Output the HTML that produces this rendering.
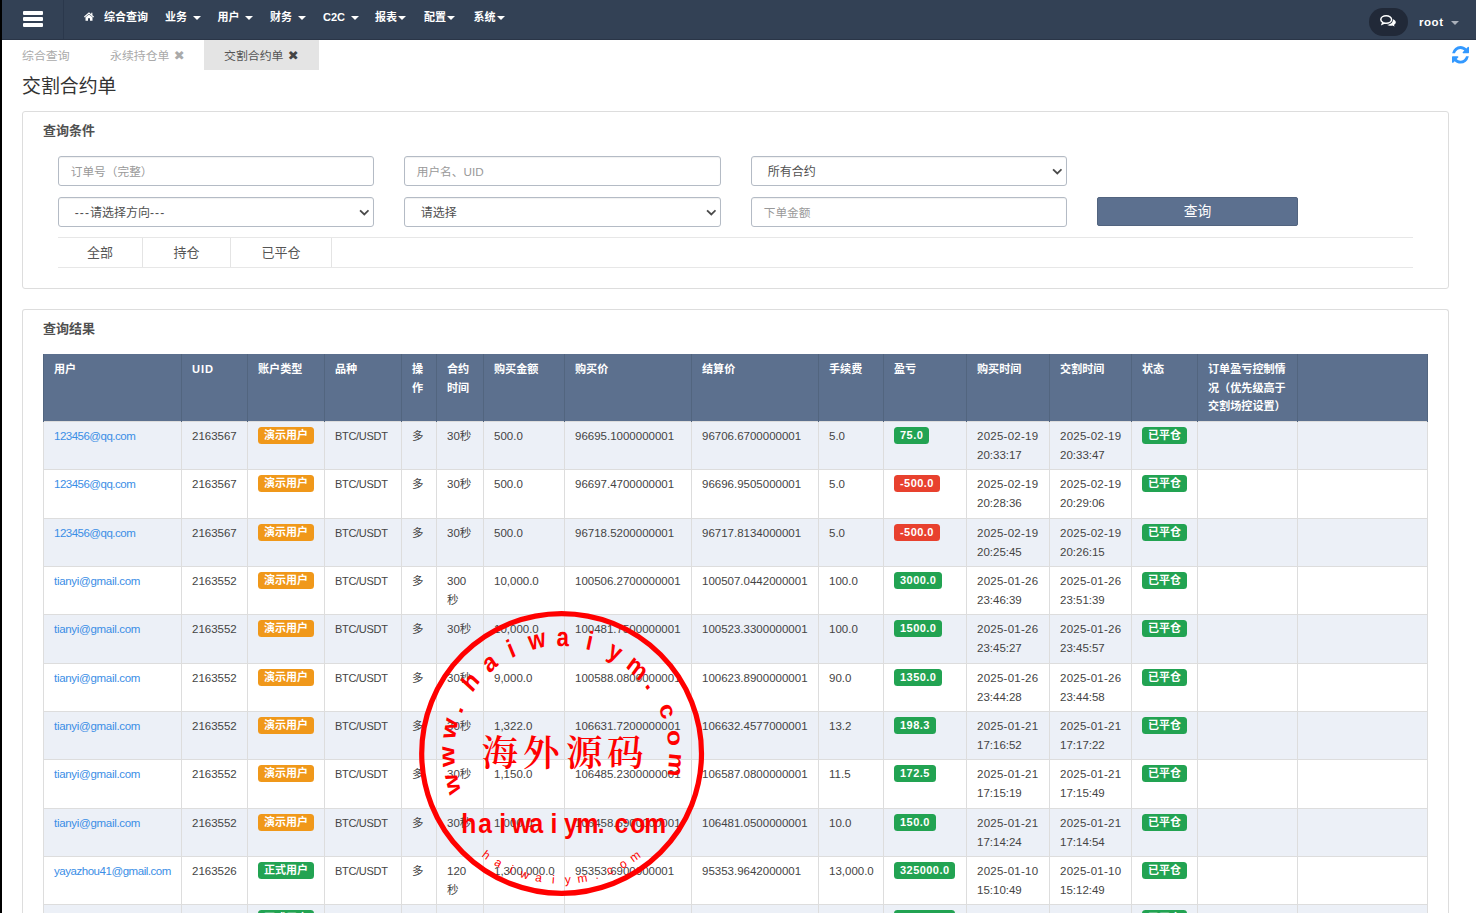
<!DOCTYPE html>
<html lang="zh-CN">
<head>
<meta charset="utf-8">
<title>交割合约单</title>
<style>
*{box-sizing:border-box;margin:0;padding:0}
html,body{width:1476px;height:913px;overflow:hidden;background:#fff}
body{font-family:"Liberation Sans","Noto Sans CJK SC",sans-serif;color:#333;font-size:11.7px;position:relative}
.edge{position:absolute;left:0;top:0;width:2px;height:913px;background:#000;z-index:50}
.nav{position:absolute;left:0;top:0;width:1476px;height:39.5px;background:#334155;border-bottom:1px solid #2a3547}
.nav .sep{position:absolute;left:63px;top:0;width:1px;height:39px;background:#2b384c}
.hb{position:absolute;left:22.5px;width:20px;height:4px;background:#fff;border-radius:1px}
.menu{position:absolute;top:0;left:0;height:39px;color:#fff;font-weight:bold;font-size:11px;line-height:35px;white-space:nowrap}
.menu span{position:absolute;top:0}
.car{display:inline-block;width:0;height:0;border-left:4px solid transparent;border-right:4px solid transparent;border-top:4px solid #fff;vertical-align:middle;margin-left:5.5px;position:relative;top:0px}
.chat{position:absolute;left:1369px;top:8px;width:39px;height:27.5px;border-radius:14px;background:#212938}
.root{position:absolute;left:1419px;top:0;line-height:45px;font-size:11.5px;letter-spacing:0.55px;font-weight:bold;color:#fff}
.rcar{position:absolute;left:1451px;top:20.5px;width:0;height:0;border-left:4px solid transparent;border-right:4px solid transparent;border-top:4px solid #aab0ba}
.tabs{position:absolute;left:0;top:40px;height:30px;width:1476px;font-size:11.9px;line-height:32px}
.tabs span{position:absolute;top:0;white-space:nowrap}
.tabs .act{left:204px;width:114.5px;height:30px;background:#e4e4e4}
.x{font-family:"DejaVu Sans",sans-serif;font-weight:bold;font-size:13px;margin-left:1px;line-height:10px}
h1{position:absolute;left:22px;top:71.5px;font-size:18.9px;font-weight:normal;line-height:30px;color:#333}
.panel{position:absolute;left:22px;width:1427px;border:1px solid #ddd;border-radius:3px;background:#fff}
.pt{position:absolute;left:20px;font-size:13px;font-weight:bold;color:#505050;line-height:20px}
.inp{position:absolute;height:30px;border:1px solid #b4bbc5;border-radius:3px;background:#fff;font-size:11.7px;line-height:29.5px;padding-left:12px;color:#999;box-shadow:inset 0 1px 1px rgba(0,0,0,.06)}
.sel{color:#505050;padding-left:16px;font-size:12px;line-height:31px}.ds{font-style:normal;letter-spacing:1.1px}
.sel svg{position:absolute;right:3.5px;top:11px}
.btn{position:absolute;left:1074.2px;top:85px;width:200.5px;height:29.3px;background:#5c708f;border:1px solid #52647f;border-radius:2px;color:#fff;font-size:13.8px;line-height:27px;text-align:center}
.strip{position:absolute;left:35px;top:124.6px;width:1355px;height:31px;border-top:1px solid #e7e7e7;border-bottom:1px solid #e7e7e7;font-size:13px;line-height:29px;color:#555}
.strip span{position:absolute;top:0;height:29px;border-right:1px solid #e4e4e4;text-align:center}
table{position:absolute;left:20px;top:44px;border-collapse:collapse;table-layout:fixed;width:1384px;font-size:11.5px}
th{background:#5c708e;color:#fff;font-weight:bold;font-size:11.1px;text-align:left;vertical-align:top;padding:6px 10px 0 10px;line-height:18.6px;height:67.5px;border-left:1px solid #52657f;border-right:1px solid #52657f}
td{vertical-align:top;padding:5px 4px 0 10px;line-height:19px;height:48.35px;border:1px solid #ddd;color:#444;white-space:nowrap;overflow:hidden}
tr:nth-child(odd) td{background:#ecf0f7}
td a{color:#3a8ee6;letter-spacing:-0.5px}td a.e{letter-spacing:-0.3px}td a.y{letter-spacing:-0.46px}.nb{letter-spacing:0.45px;font-size:11.4px;line-height:18px}.d{letter-spacing:0.25px}.sym{font-size:11px;letter-spacing:-0.3px}
.bd{display:inline-block;color:#fff;font-weight:bold;font-size:11px;line-height:16.5px;height:17px;padding:0 6px;border-radius:3.5px;vertical-align:top;margin-top:0}
.or{background:#f0981a}.gr{background:#22a352}.rd{background:#e8412e}
.stamp{position:absolute;left:0;top:0;z-index:40;pointer-events:none}
</style>
</head>
<body>
<div class="nav">
  <div class="hb" style="top:11px"></div><div class="hb" style="top:17.2px"></div><div class="hb" style="top:23.4px"></div>
  <div class="sep"></div>
  <div class="menu">
    <svg style="position:absolute;left:84px;top:12.1px" width="10" height="9" viewBox="0 0 10 9"><path d="M5 0.3 L0 4.6 L0.7 5.4 L5 1.8 L9.3 5.4 L10 4.6 L8.4 3.2 V0.8 H7.2 V2.2 Z M1.5 5.3 L5 2.5 L8.5 5.3 V8.8 H6 V6.2 H4 V8.8 H1.5 Z" fill="#fff"/></svg>
    <span style="left:104px">综合查询</span>
    <span style="left:165px">业务<i class="car"></i></span>
    <span style="left:217.5px">用户<i class="car"></i></span>
    <span style="left:270px">财务<i class="car"></i></span>
    <span style="left:323px">C2C<i class="car"></i></span>
    <span style="left:375px">报表<i class="car" style="margin-left:1px"></i></span>
    <span style="left:424px">配置<i class="car" style="margin-left:1px"></i></span>
    <span style="left:473.5px">系统<i class="car" style="margin-left:1px"></i></span>
  </div>
  <div class="chat">
    <svg style="position:absolute;left:11px;top:7px" width="17" height="13" viewBox="0 0 17 13"><path d="M6.2 0.8 C3.2 0.8 0.8 2.4 0.8 4.5 C0.8 5.7 1.6 6.7 2.8 7.4 L2.2 9 L4.4 8 C5 8.1 5.6 8.2 6.2 8.2 C9.2 8.2 11.6 6.6 11.6 4.5 C11.6 2.4 9.2 0.8 6.2 0.8 Z" fill="none" stroke="#fff" stroke-width="1.5"/><path d="M12.9 4.2 C14.6 4.8 15.8 5.9 15.8 7.3 C15.8 8.4 15.1 9.3 14 9.9 L14.6 11.6 L12.3 10.6 C11.8 10.7 11.3 10.8 10.7 10.8 C9.3 10.8 8 10.4 7.1 9.8 C10.5 9.6 13.1 7.5 12.9 4.2 Z" fill="#fff"/></svg>
  </div>
  <div class="root">root</div>
  <div class="rcar"></div>
</div>
<div class="tabs">
  <span class="act"></span>
  <span style="left:22px;color:#aaa">综合查询</span>
  <span style="left:110px;color:#aaa">永续持仓单 <b class="x">✖</b></span>
  <span style="left:224px;color:#555">交割合约单 <b class="x" style="color:#444">✖</b></span>
  <svg style="position:absolute;left:1452px;top:6px" width="17" height="17.6" preserveAspectRatio="none" viewBox="0 0 1536 1536"><path fill="#3399ff" d="M1511 928q0 5-1 7-64 268-268 434.500T764 1536q-146 0-282.500-55T238 1324l-129 129q-19 19-45 19t-45-19-19-45V960q0-26 19-45t45-19h448q26 0 45 19t19 45-19 45l-137 137q71 66 161 102t187 36q134 0 250-65t186-179q11-17 53-117 8-23 30-23h192q13 0 22.500 9.500t9.500 22.500zm25-800v448q0 26-19 45t-45 19h-448q-26 0-45-19t-19-45 19-45l138-138Q969 256 768 256q-134 0-250 65T332 500q-11 17-53 117-8 23-30 23H50q-13 0-22.500-9.500T18 608v-7q65-268 270-434.500T768 0q146 0 284 55.500T1297 212l130-129q19-19 45-19t45 19 19 45z"/></svg>
</div>
<h1>交割合约单</h1>
<div class="panel" style="top:111px;height:178px">
  <div class="pt" style="top:9px">查询条件</div>
  <div class="inp" style="left:34.7px;top:43.5px;width:316px">订单号（完整）</div>
  <div class="inp" style="left:380.7px;top:43.5px;width:317px">用户名、UID</div>
  <div class="inp sel" style="left:727.7px;top:43.5px;width:316px">所有合约<svg width="10.6" height="7.4" viewBox="0 0 10 7"><path d="M1 1.2 L5 5.2 L9 1.2" fill="none" stroke="#4a4a4a" stroke-width="1.7"/></svg></div>
  <div class="inp sel" style="left:34.7px;top:84.5px;width:316px"><i class="ds">---</i>请选择方向<i class="ds">---</i><svg width="10.6" height="7.4" viewBox="0 0 10 7"><path d="M1 1.2 L5 5.2 L9 1.2" fill="none" stroke="#4a4a4a" stroke-width="1.7"/></svg></div>
  <div class="inp sel" style="left:380.7px;top:84.5px;width:317px">请选择<svg width="10.6" height="7.4" viewBox="0 0 10 7"><path d="M1 1.2 L5 5.2 L9 1.2" fill="none" stroke="#4a4a4a" stroke-width="1.7"/></svg></div>
  <div class="inp" style="left:727.7px;top:84.5px;width:316px">下单金额</div>
  <div class="btn">查询</div>
  <div class="strip">
    <span style="left:0;width:85px">全部</span>
    <span style="left:85px;width:88px">持仓</span>
    <span style="left:173px;width:101px">已平仓</span>
  </div>
</div>
<div class="panel" style="top:309px;height:640px;border-bottom:0">
  <div class="pt" style="top:9px">查询结果</div>
  <table>
  <colgroup><col style="width:138px"><col style="width:66px"><col style="width:77px"><col style="width:77px"><col style="width:35px"><col style="width:47px"><col style="width:81px"><col style="width:127px"><col style="width:127px"><col style="width:65px"><col style="width:83px"><col style="width:83px"><col style="width:82px"><col style="width:66px"><col style="width:100px"><col style="width:130px"></colgroup>
  <thead><tr><th>用户</th><th style="letter-spacing:0.9px">UID</th><th>账户类型</th><th>品种</th><th>操<br>作</th><th>合约<br>时间</th><th>购买金额</th><th>购买价</th><th>结算价</th><th>手续费</th><th>盈亏</th><th>购买时间</th><th>交割时间</th><th>状态</th><th>订单盈亏控制情<br>况（优先级高于<br>交割场控设置）</th><th></th></tr></thead>
  <tbody>
<tr><td><a>123456@qq.com</a></td><td>2163567</td><td><span class="bd or">演示用户</span></td><td class="sym">BTC/USDT</td><td>多</td><td>30秒</td><td>500.0</td><td>96695.1000000001</td><td>96706.6700000001</td><td>5.0</td><td><span class="bd nb gr">75.0</span></td><td><span class="d">2025-02-19</span><br>20:33:17</td><td><span class="d">2025-02-19</span><br>20:33:47</td><td><span class="bd gr">已平仓</span></td><td></td><td></td></tr>
<tr><td><a>123456@qq.com</a></td><td>2163567</td><td><span class="bd or">演示用户</span></td><td class="sym">BTC/USDT</td><td>多</td><td>30秒</td><td>500.0</td><td>96697.4700000001</td><td>96696.9505000001</td><td>5.0</td><td><span class="bd nb rd">-500.0</span></td><td><span class="d">2025-02-19</span><br>20:28:36</td><td><span class="d">2025-02-19</span><br>20:29:06</td><td><span class="bd gr">已平仓</span></td><td></td><td></td></tr>
<tr><td><a>123456@qq.com</a></td><td>2163567</td><td><span class="bd or">演示用户</span></td><td class="sym">BTC/USDT</td><td>多</td><td>30秒</td><td>500.0</td><td>96718.5200000001</td><td>96717.8134000001</td><td>5.0</td><td><span class="bd nb rd">-500.0</span></td><td><span class="d">2025-02-19</span><br>20:25:45</td><td><span class="d">2025-02-19</span><br>20:26:15</td><td><span class="bd gr">已平仓</span></td><td></td><td></td></tr>
<tr><td><a class="e">tianyi@gmail.com</a></td><td>2163552</td><td><span class="bd or">演示用户</span></td><td class="sym">BTC/USDT</td><td>多</td><td>300<br>秒</td><td>10,000.0</td><td>100506.2700000001</td><td>100507.0442000001</td><td>100.0</td><td><span class="bd nb gr">3000.0</span></td><td><span class="d">2025-01-26</span><br>23:46:39</td><td><span class="d">2025-01-26</span><br>23:51:39</td><td><span class="bd gr">已平仓</span></td><td></td><td></td></tr>
<tr><td><a class="e">tianyi@gmail.com</a></td><td>2163552</td><td><span class="bd or">演示用户</span></td><td class="sym">BTC/USDT</td><td>多</td><td>30秒</td><td>10,000.0</td><td>100481.7500000001</td><td>100523.3300000001</td><td>100.0</td><td><span class="bd nb gr">1500.0</span></td><td><span class="d">2025-01-26</span><br>23:45:27</td><td><span class="d">2025-01-26</span><br>23:45:57</td><td><span class="bd gr">已平仓</span></td><td></td><td></td></tr>
<tr><td><a class="e">tianyi@gmail.com</a></td><td>2163552</td><td><span class="bd or">演示用户</span></td><td class="sym">BTC/USDT</td><td>多</td><td>30秒</td><td>9,000.0</td><td>100588.0800000001</td><td>100623.8900000001</td><td>90.0</td><td><span class="bd nb gr">1350.0</span></td><td><span class="d">2025-01-26</span><br>23:44:28</td><td><span class="d">2025-01-26</span><br>23:44:58</td><td><span class="bd gr">已平仓</span></td><td></td><td></td></tr>
<tr><td><a class="e">tianyi@gmail.com</a></td><td>2163552</td><td><span class="bd or">演示用户</span></td><td class="sym">BTC/USDT</td><td>多</td><td>30秒</td><td>1,322.0</td><td>106631.7200000001</td><td>106632.4577000001</td><td>13.2</td><td><span class="bd nb gr">198.3</span></td><td><span class="d">2025-01-21</span><br>17:16:52</td><td><span class="d">2025-01-21</span><br>17:17:22</td><td><span class="bd gr">已平仓</span></td><td></td><td></td></tr>
<tr><td><a class="e">tianyi@gmail.com</a></td><td>2163552</td><td><span class="bd or">演示用户</span></td><td class="sym">BTC/USDT</td><td>多</td><td>30秒</td><td>1,150.0</td><td>106485.2300000001</td><td>106587.0800000001</td><td>11.5</td><td><span class="bd nb gr">172.5</span></td><td><span class="d">2025-01-21</span><br>17:15:19</td><td><span class="d">2025-01-21</span><br>17:15:49</td><td><span class="bd gr">已平仓</span></td><td></td><td></td></tr>
<tr><td><a class="e">tianyi@gmail.com</a></td><td>2163552</td><td><span class="bd or">演示用户</span></td><td class="sym">BTC/USDT</td><td>多</td><td>30秒</td><td>1,000.0</td><td>106458.6900000001</td><td>106481.0500000001</td><td>10.0</td><td><span class="bd nb gr">150.0</span></td><td><span class="d">2025-01-21</span><br>17:14:24</td><td><span class="d">2025-01-21</span><br>17:14:54</td><td><span class="bd gr">已平仓</span></td><td></td><td></td></tr>
<tr><td><a class="y">yayazhou41@gmail.com</a></td><td>2163526</td><td><span class="bd gr">正式用户</span></td><td class="sym">BTC/USDT</td><td>多</td><td>120<br>秒</td><td>1,300,000.0</td><td>95353.6900000001</td><td>95353.9642000001</td><td>13,000.0</td><td><span class="bd nb gr">325000.0</span></td><td><span class="d">2025-01-10</span><br>15:10:49</td><td><span class="d">2025-01-10</span><br>15:12:49</td><td><span class="bd gr">已平仓</span></td><td></td><td></td></tr>
<tr><td></td><td></td><td><span class="bd gr">正式用户</span></td><td></td><td></td><td></td><td></td><td></td><td></td><td></td><td><span class="bd nb gr">325000.0</span></td><td></td><td></td><td><span class="bd gr">已平仓</span></td><td></td><td></td></tr>
  </tbody>
  </table>
</div>
<svg class="stamp" width="1476" height="913" viewBox="0 0 1476 913">
<circle cx="561.6" cy="753.45" r="139.9" fill="none" stroke="#ff0000" stroke-width="5.2"/>
<text font-family="'Liberation Sans',sans-serif" font-weight="bold" font-size="26.5" fill="#ff0000" textLength="210.3" lengthAdjust="spacingAndGlyphs" x="461.0 454.7 454.8 461.5 472.3 489.3 511.5 529.9 556.6 584.9 606.5 625.3 644.6 658.6 666.8 669.4" y="791.8 766.4 740.2 714.8 693.5 673.9 658.5 650.6 646.1 648.7 655.8 666.5 685.4 707.2 731.1 752.5" rotate="253.8 267.7 281.7 292.8 307.5 321.2 333.9 347.5 0.9 14.2 28.0 41.5 52.3 67.9 81.6 94.8">www.haiwaiym.com</text>
<text font-family="'Noto Serif CJK SC',serif" font-weight="600" font-size="36.5" fill="#ff0000" x="481.5 523 566 607" y="766.3">海外源码</text>
<text transform="translate(460,833.3) scale(0.88,1)" font-family="'Liberation Sans',sans-serif" font-weight="bold" font-size="28" fill="#ff0000" x="1.3 20.7 44.6 58.4 79.0 102.9 118.1 132.5 156.4 175.6 193.4 209.3" y="0">haiwaiym.com</text>
<text font-family="'Liberation Sans',sans-serif" font-size="12" fill="#ff0000" x="481.3 493.4 508.6 519.6 534.8 551.7 565.0 577.9 595.7 608.5 621.9 633.3" y="856.3 864.6 872.6 877.0 881.1 883.5 883.8 882.9 879.3 875.1 869.1 862.5" rotate="36.5 30.0 23.4 16.8 10.3 3.8 357.2 350.6 344.1 337.6 331.0 324.4">haiwaiym.com</text>
</svg>
<div class="edge"></div>
</body>
</html>
